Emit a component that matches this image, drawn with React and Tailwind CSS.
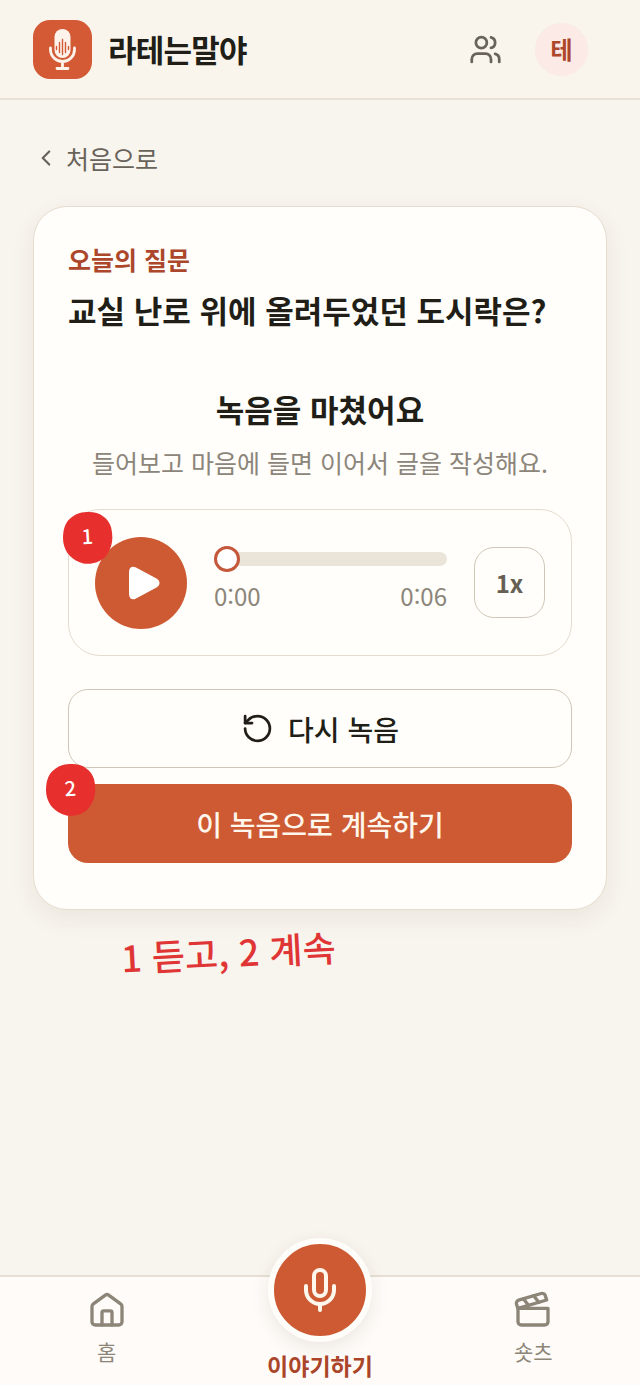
import { useState } from 'react';
import { ChevronLeft, Mic, RotateCcw, Users } from 'lucide-react';

const strokeProps = {
  viewBox: '0 0 24 24',
  fill: 'none',
  stroke: 'currentColor',
  strokeWidth: 2,
  strokeLinecap: 'round',
  strokeLinejoin: 'round',
  'aria-hidden': true,
};

function HomeIcon({ className }) {
  return (
    <svg {...strokeProps} className={className}>
      <path d="M3 9.900a2 2 0 0 1 .8-1.600l7.200-5.200a1.700 1.700 0 0 1 2 0l7.200 5.200a2 2 0 0 1 .8 1.600V19a2 2 0 0 1-2 2H5a2 2 0 0 1-2-2Z" />
      <path d="M9 21v-7.500a1 1 0 0 1 1-1h4a1 1 0 0 1 1 1V21" />
    </svg>
  );
}

function ShortsIcon({ className }) {
  return (
    <svg {...strokeProps} className={className}>
      <path d="M20.200 6 3 11l-.9-2.400c-.3-1.100.3-2.200 1.300-2.500l13.500-4c1.100-.3 2.200.3 2.500 1.300Z" />
      <path d="m6.200 5.300 3.100 3.900" />
      <path d="m12.400 3.400 3.100 4" />
      <path d="M3 11h18v8a2 2 0 0 1-2 2H5a2 2 0 0 1-2-2Z" />
    </svg>
  );
}

function Logo() {
  return (
    <svg viewBox="0 0 59 59" className="size-[59px] shrink-0" aria-hidden="true">
      <rect width="59" height="59" rx="17" fill="#d35a35" />
      <rect x="21.5" y="9" width="16" height="29" rx="8" fill="#fdf3ea" />
      <path
        d="M17.500 28v1.500a12 12 0 0 0 24 0V28M29.500 42v6.500M24 48.500h11"
        fill="none"
        stroke="#fdf3ea"
        strokeWidth="2.8"
        strokeLinecap="round"
      />
      <path
        d="M23.500 26.500v3M26.500 22.500v10M29.500 19.500v15M32.500 22.500v10M35.500 26.500v3"
        fill="none"
        stroke="#d35a35"
        strokeWidth="1.4"
        strokeLinecap="round"
      />
    </svg>
  );
}

function Header() {
  return (
    <header className="flex h-[100px] items-center border-b-2 border-[#e9e1d6] bg-[#f9f5ed] pr-[52px] pl-[33px]">
      <Logo />
      <span className="ml-4 text-[31px] leading-10 font-bold tracking-tight text-[#211e18]">라테는말야</span>
      <button type="button" aria-label="가족" className="ml-auto text-[#69635a]">
        <Users className="size-[33px]" />
      </button>
      <button
        type="button"
        className="ml-[33px] flex size-[53px] items-center justify-center rounded-full bg-[#fbeae6] text-2xl font-bold text-[#ac472b]"
      >
        테
      </button>
    </header>
  );
}

// Hand-drawn step marker laid over the control it points to.
function StepMarker({ step, className }) {
  return (
    <span className={`absolute flex h-[52px] w-[50px] justify-center pt-3 ${className}`}>
      <svg viewBox="0 0 50 52" className="absolute inset-0 size-full" aria-hidden="true">
        <path
          d="M26 0C37 0 45 6 48 15C51 27 49 37 42 45C36 51 25 54 16 50C6 46 0 37 0 26C0 16 3 9 9 5C14 1 19 0 26 0Z"
          fill="#e7302e"
        />
      </svg>
      <span className="relative -rotate-3 text-xl leading-6 font-medium text-white">{step}</span>
    </span>
  );
}

function Player() {
  const [time, setTime] = useState(0);
  const [playing, setPlaying] = useState(false);

  return (
    <div className="relative mt-7 flex h-[147px] items-center gap-[27px] rounded-[32px] border border-[#e3dccf] px-[26px]">
      <button
        type="button"
        aria-label="재생"
        aria-pressed={playing}
        onClick={() => setPlaying(!playing)}
        className="flex size-[92px] shrink-0 items-center justify-center rounded-full bg-[#cd5a33] text-white"
      >
        <svg viewBox="0 0 32 34" className="ml-1.5 h-[34px] w-8" aria-hidden="true">
          <path d="M1 6C1 1 4.500-.5 8 1.500L28.500 12.500C32.500 14.800 32.500 19.200 28.500 21.500L8 32.500C4.500 34.500 1 33 1 28Z" fill="currentColor" />
        </svg>
      </button>
      <div className="flex min-w-0 flex-1 flex-col gap-3 pb-3">
        <input
          type="range"
          aria-label="재생 위치"
          min="0"
          max="6"
          value={time}
          onChange={(e) => setTime(Number(e.target.value))}
          className="block h-[26px] w-full appearance-none bg-transparent [&::-webkit-slider-runnable-track]:h-[14px] [&::-webkit-slider-runnable-track]:rounded-full [&::-webkit-slider-runnable-track]:bg-[#ebe4d9] [&::-webkit-slider-thumb]:-mt-[6px] [&::-webkit-slider-thumb]:size-[26px] [&::-webkit-slider-thumb]:appearance-none [&::-webkit-slider-thumb]:rounded-full [&::-webkit-slider-thumb]:border-3 [&::-webkit-slider-thumb]:border-solid [&::-webkit-slider-thumb]:border-[#c4583a] [&::-webkit-slider-thumb]:bg-white"
        />
        <div className="flex justify-between text-2xl leading-6 text-[#8c857a]">
          <span>0:0{time}</span>
          <span>0:06</span>
        </div>
      </div>
      <button
        type="button"
        className="size-[71px] shrink-0 rounded-[20px] border border-[#cfc8b8] text-2xl font-bold text-[#655f54]"
      >
        1x
      </button>
      <StepMarker step="1" className="top-0.5 -left-[6px]" />
    </div>
  );
}

function NavItem({ icon: Icon, label }) {
  return (
    <a href="#" className="flex flex-col items-center gap-[7px] pt-[13px] text-[#8c8578]">
      <Icon className="size-10" />
      <span className="text-[21px] leading-7">{label}</span>
    </a>
  );
}

function BottomNav() {
  return (
    <nav className="sticky bottom-0 grid h-[110px] grid-cols-3 border-t-2 border-[#e6dfd4] bg-[#fefbf8]">
      <NavItem icon={HomeIcon} label="홈" />
      <a href="#" className="-mt-[39px] flex flex-col items-center gap-[9px] text-[#ab452a]">
        <span className="flex size-[104px] shrink-0 items-center justify-center rounded-full border-6 border-[#fffdf9] bg-[#cd5a33] text-[#fff6ec] shadow-[0_6px_18px_rgba(90,60,30,0.1)]">
          <Mic className="size-12" />
        </span>
        <span className="text-[23px] leading-7 font-bold">이야기하기</span>
      </a>
      <NavItem icon={ShortsIcon} label="숏츠" />
    </nav>
  );
}

export default function App() {
  return (
    <div lang="ko" className="flex min-h-screen flex-col bg-[#f8f4ee] font-['Noto_Sans_CJK_KR',sans-serif] text-[#211e18]">
      <Header />
      <main className="flex-1 px-[33px] pt-[39px]">
        <a href="#" className="flex w-fit items-center gap-[7px] text-[25px] leading-[38px] text-[#69635a]">
          <ChevronLeft className="size-[26px]" />
          처음으로
        </a>
        <section className="mt-[29px] rounded-[34px] border border-[#e6dccf] bg-[#fffefa] px-[34px] pt-[33px] pb-[46px] shadow-[0_8px_24px_rgba(90,60,30,0.08)]">
          <p className="text-[25px] leading-[38px] font-bold text-[#ac472b]">오늘의 질문</p>
          <h1 className="mt-[11px] text-[31px] leading-[42px] font-bold">교실 난로 위에 올려두었던 도시락은?</h1>
          <h2 className="mt-[57px] text-center text-[31px] leading-[42px] font-bold">녹음을 마쳤어요</h2>
          <p className="mt-[13px] text-center text-[25px] leading-[38px] text-[#8c857a]">들어보고 마음에 들면 이어서 글을 작성해요.</p>
          <Player />
          <button
            type="button"
            className="mt-[33px] flex h-[79px] w-full items-center justify-center gap-[14px] rounded-[20px] border border-[#cfc8b8] text-[28px] font-medium"
          >
            <RotateCcw className="size-[33px]" />
            다시 녹음
          </button>
          <div className="relative mt-4">
            <button type="button" className="h-[79px] w-full rounded-[20px] bg-[#cd5a33] text-[28px] font-medium text-[#fff6ec]">
              이 녹음으로 계속하기
            </button>
            <StepMarker step="2" className="-top-5 -left-[22px]" />
          </div>
        </section>
        <p className="mt-[18px] ml-[88px] w-fit -rotate-3 text-4xl leading-[46px] font-medium text-[#e03535]">1 듣고, 2 계속</p>
      </main>
      <BottomNav />
    </div>
  );
}
